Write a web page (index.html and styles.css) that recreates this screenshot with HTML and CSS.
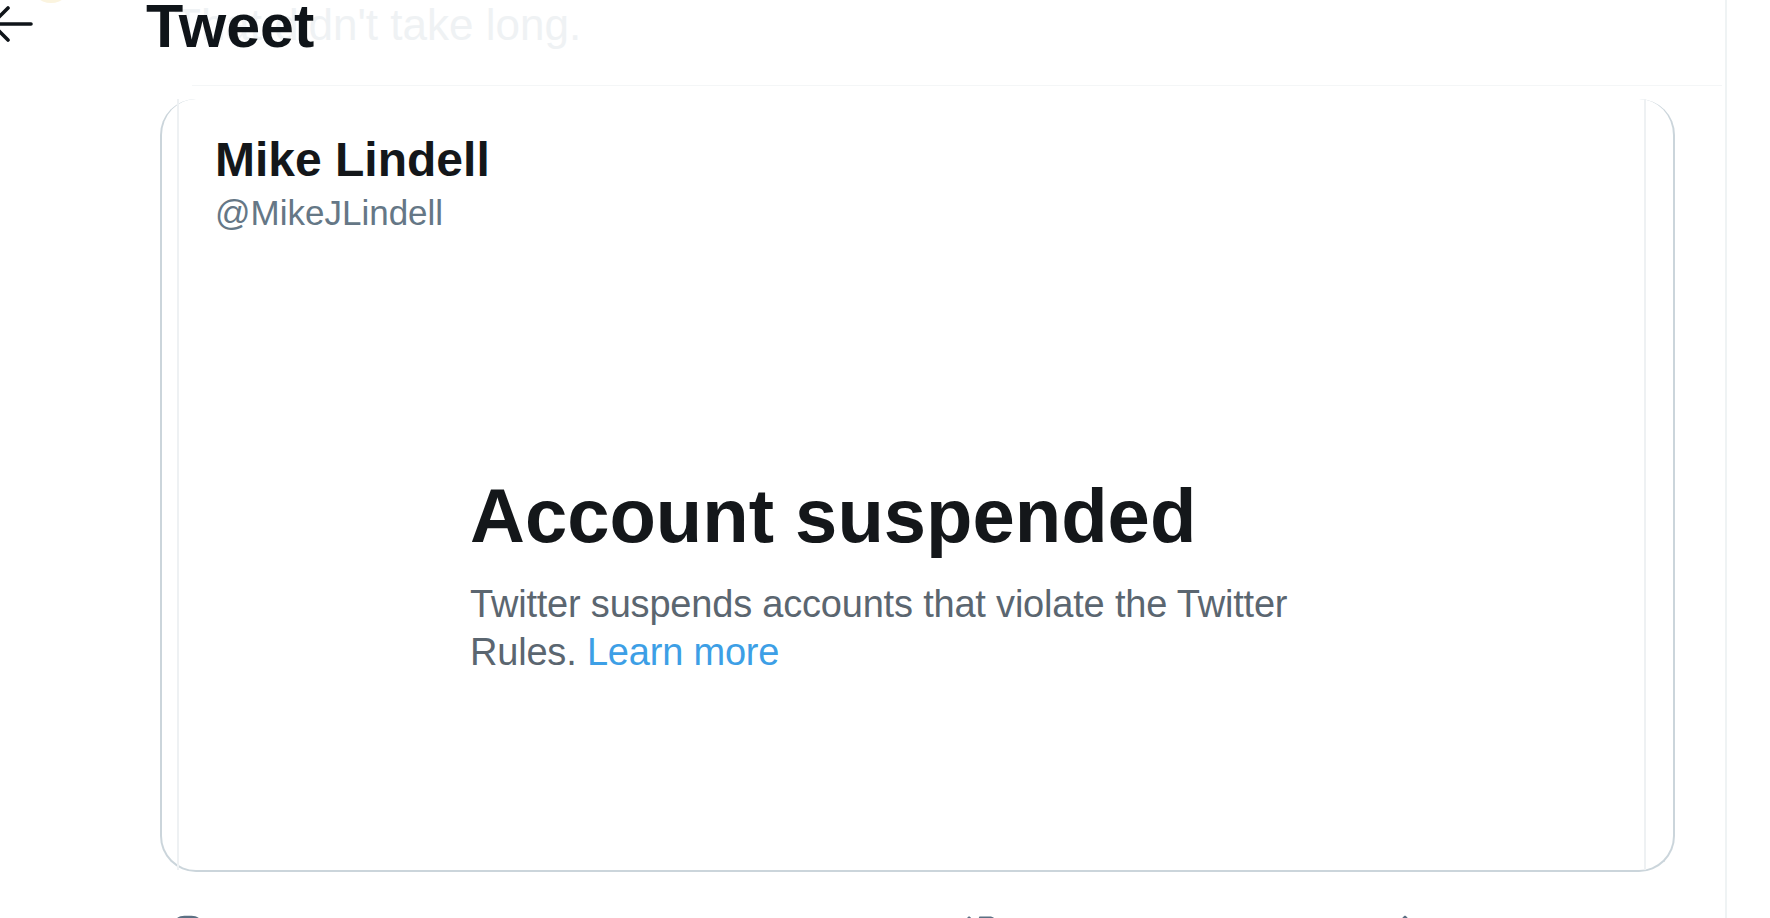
FILE: index.html
```html
<!DOCTYPE html>
<html lang="en">
<head>
<meta charset="utf-8">
<title>Tweet</title>
<link rel="stylesheet" href="styles.css">
</head>
<body>
<div class="page">
  <main class="col">
    <header class="hdr">
      <div class="ghost-avatar"></div>
      <span class="ghost-text">That didn't take long.</span>
      <div class="ghost-line"></div>
      <svg class="back" viewBox="0 0 40 48" aria-label="Back">
        <path d="M-8 24H31M8 8L-8 24L8 40" fill="none" stroke="#0f1419" stroke-width="3.6" stroke-linecap="round" stroke-linejoin="round"/>
      </svg>
      <h1 class="title">Tweet</h1>
    </header>

    <section class="card">
      <div class="shot">
        <div class="name">Mike Lindell</div>
        <div class="handle">@MikeJLindell</div>
        <div class="susp">
          <h2 class="susp-title">Account suspended</h2>
          <p class="susp-text">Twitter suspends accounts that violate the Twitter<br>Rules. <a class="link" href="#">Learn more</a></p>
        </div>
      </div>
    </section>

    <div class="actions">
      <svg class="act act-reply" viewBox="0 0 24 24"><path d="M14.046 2.242l-4.148-.01h-.002c-4.374 0-7.8 3.427-7.8 7.802 0 4.098 3.186 7.206 7.465 7.370v3.828c0 .108.044.286.12.403.142.225.384.347.632.347.138 0 .277-.038.402-.118.264-.168 6.473-4.14 8.088-5.506 1.902-1.61 3.04-3.97 3.043-6.312v-.017c-.006-4.367-3.430-7.787-7.8-7.788zm3.787 12.972c-1.134.96-4.862 3.405-6.772 4.643V16.67c0-.414-.335-.75-.75-.75h-.396c-3.660 0-6.318-2.476-6.318-5.886 0-3.534 2.768-6.302 6.300-6.302l4.147.01h.002c3.532 0 6.3 2.766 6.302 6.296-.003 1.91-.942 3.844-2.514 5.176z"/></svg>
      <svg class="act act-rt" viewBox="0 0 24 24"><path d="M23.77 15.67c-.292-.293-.767-.293-1.06 0l-2.22 2.22V7.65c0-2.068-1.683-3.75-3.75-3.75h-5.85c-.414 0-.75.336-.75.75s.336.75.75.75h5.85c1.24 0 2.25 1.01 2.25 2.25v10.24l-2.22-2.22c-.293-.293-.768-.293-1.06 0s-.294.768 0 1.06l3.5 3.5c.145.147.337.22.53.22s.383-.072.53-.22l3.5-3.5c.294-.292.294-.767 0-1.060zm-10.66 3.28H7.26c-1.24 0-2.25-1.01-2.25-2.25V6.46l2.22 2.22c.148.147.34.22.532.22s.384-.073.53-.22c.293-.293.293-.768 0-1.06l-3.5-3.5c-.293-.294-.768-.294-1.06 0l-3.5 3.5c-.294.292-.294.767 0 1.06s.767.293 1.06 0l2.22-2.22V16.7c0 2.068 1.683 3.75 3.75 3.75h5.85c.414 0 .75-.336.75-.75s-.337-.75-.75-.75z"/></svg>
      <svg class="act act-share" viewBox="0 0 24 24"><path d="M17.53 7.47l-5-5c-.293-.293-.768-.293-1.06 0l-5 5c-.294.293-.294.768 0 1.06s.767.294 1.06 0l3.72-3.72V15c0 .414.336.75.75.75s.75-.336.75-.75V4.81l3.72 3.72c.146.147.338.22.53.22s.384-.072.53-.22c.293-.293.293-.767 0-1.06z"/><path d="M19.708 21.944H4.292C3.028 21.944 2 20.916 2 19.652V14c0-.414.336-.75.75-.75s.75.336.75.75v5.652c0 .437.355.792.792.792h15.416c.437 0 .792-.355.792-.792V14c0-.414.336-.75.75-.75s.75.336.75.75v5.652c0 1.264-1.028 2.292-2.292 2.292z"/></svg>
    </div>
  </main>
  <aside class="side"></aside>
</div>
</body>
</html>
```

FILE: styles.css
```css
html, body {
  margin: 0;
  padding: 0;
  height: 100%;
  overflow: hidden;
  background: #ffffff;
}

body {
  font-family: "Liberation Sans", Arial, Helvetica, sans-serif;
  color: #14171a;
}

.page {
  display: flex;
  height: 918px;
}

.col {
  flex: none;
  width: 1725px;
  border-right: 2px solid #eff3f4;
  overflow: hidden;
}

.side {
  flex: 1;
}

/* header */
.hdr {
  position: relative;
  height: 99px;
  display: flex;
  align-items: flex-start;
}

.ghost-avatar {
  position: absolute;
  left: 30px;
  top: -39px;
  width: 42px;
  height: 42px;
  border-radius: 50%;
  background: #fbf4df;
}

.ghost-text {
  position: absolute;
  left: 174px;
  top: 3px;
  font-size: 44px;
  line-height: 44px;
  color: #eff2f4;
  white-space: nowrap;
}

.ghost-line {
  position: absolute;
  left: 192px;
  top: 85px;
  width: 1530px;
  height: 30px;
  border-top: 1px solid #f4f6f7;
}

.back {
  flex: none;
  width: 40px;
  height: 48px;
  position: relative;
}

.title {
  position: relative;
  margin: -4px 0 0 106px;
  font-size: 61px;
  line-height: 61px;
  font-weight: 700;
  letter-spacing: 0;
  color: #0f1419;
}

/* card */
.card {
  box-sizing: border-box;
  margin-left: 160px;
  width: 1515px;
  height: 773px;
  border: 2px solid #cbd5db;
  border-top: 0;
  border-radius: 36px;
  padding: 0 27px 0 15px;
  display: flex;
}

.shot {
  flex: 1;
  border-left: 2px solid #eef1f3;
  border-right: 2px solid #eef1f3;
  padding: 33px 0 0 36px;
}

.name {
  font-size: 48px;
  line-height: 56px;
  font-weight: 700;
  color: #14171a;
}

.handle {
  margin-top: 3px;
  font-size: 35px;
  line-height: 44px;
  color: #657786;
}

.susp {
  margin: 240px 0 0 255px;
}

.susp-title {
  margin: 0;
  font-size: 76px;
  line-height: 82px;
  font-weight: 700;
  color: #14171a;
}

.susp-text {
  margin: 23px 0 0;
  font-size: 38px;
  line-height: 48px;
  letter-spacing: -0.2px;
  color: #5b6670;
}

.link {
  color: #3d9fe6;
  text-decoration: none;
}

/* actions */
.actions {
  display: flex;
  align-items: flex-start;
  margin-top: 40px;
  padding-left: 168px;
}

.act {
  flex: none;
  width: 40px;
  height: 40px;
  fill: #5b7083;
}

.act-rt {
  margin: -2px 0 0 754px;
}

.act-share {
  margin: 0 0 0 383px;
}
```
